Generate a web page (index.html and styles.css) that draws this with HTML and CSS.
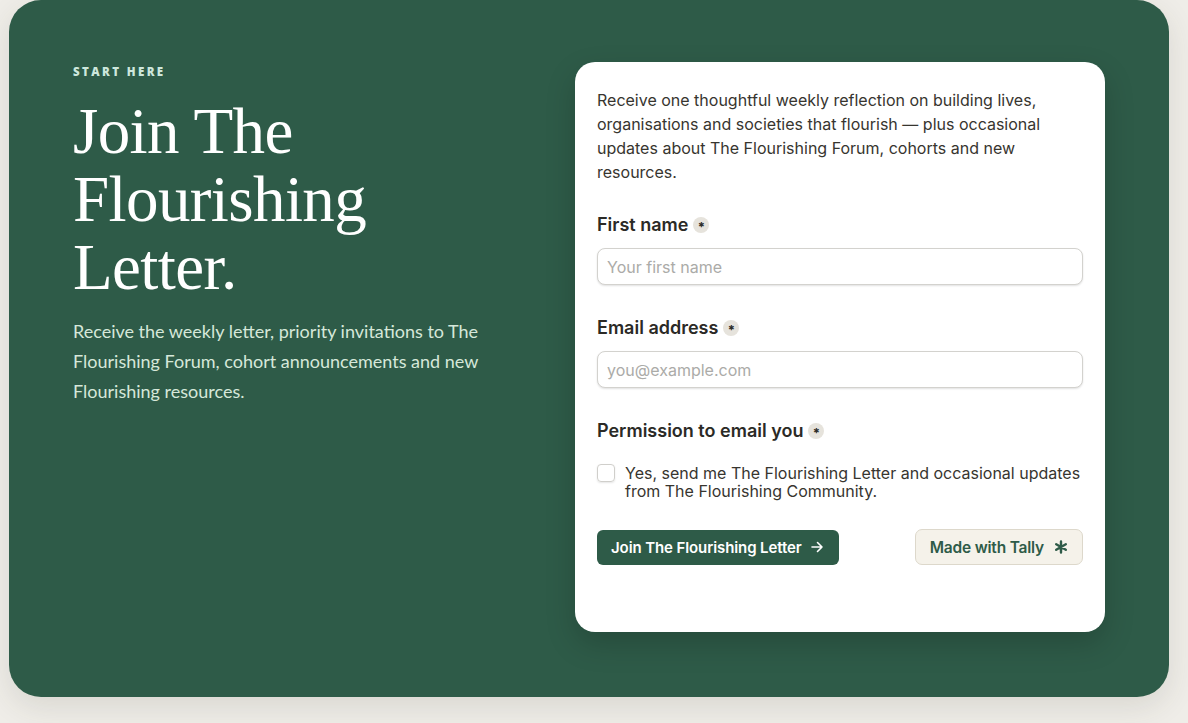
FILE: index.html
```html
<!DOCTYPE html>
<html lang="en">
<head>
<meta charset="utf-8">
<title>Join The Flourishing Letter</title>
<link rel="stylesheet" href="styles.css">
</head>
<body>
<main class="panel">
  <section class="intro">
    <p class="eyebrow">START HERE</p>
    <h1 class="title">Join The Flourishing Letter.</h1>
    <p class="lede">Receive the weekly letter, priority invitations to The Flourishing Forum, cohort announcements and new Flourishing resources.</p>
  </section>
  <section class="card">
    <p class="desc">Receive one thoughtful weekly reflection on building lives, organisations and societies that flourish — plus occasional updates about The Flourishing Forum, cohorts and new resources.</p>
    <div class="field">
      <label class="label">First name <span class="req">*</span></label>
      <input class="input" type="text" placeholder="Your first name">
    </div>
    <div class="field">
      <label class="label">Email address <span class="req">*</span></label>
      <input class="input" type="email" placeholder="you@example.com">
    </div>
    <div class="field">
      <label class="label">Permission to email you <span class="req">*</span></label>
      <label class="check">
        <span class="box"></span>
        <span class="check-text">Yes, send me The Flourishing Letter and occasional updates from The Flourishing Community.</span>
      </label>
    </div>
    <div class="actions">
      <button class="submit" type="button">Join The Flourishing Letter
        <svg class="arrow" width="14" height="14" viewBox="0 0 14 14" fill="none" stroke="currentColor" stroke-width="1.6" stroke-linecap="round" stroke-linejoin="round"><path d="M2 7h10M7.5 2.5L12 7l-4.5 4.5"/></svg>
      </button>
      <a class="tally">Made with Tally
        <svg class="tally-star" width="14" height="14" viewBox="0 0 14 14" fill="none" stroke="currentColor" stroke-width="2.4" stroke-linecap="round"><path d="M7 1.5v11M2.2 4.2l9.6 5.6M11.8 4.2l-9.6 5.6"/></svg>
      </a>
    </div>
  </section>
</main>
</body>
</html>
```
FILE: styles.css
```css
* { box-sizing: border-box; }
html, body { margin: 0; }
body {
  background: #efede8;
  padding: 0 19px 0 9px;
  height: 723px;
  overflow: hidden;
}
.panel {
  background: #2e5b48;
  border-radius: 32px;
  height: 697px;
  display: flex;
  justify-content: space-between;
  padding: 62px 64px 0 64px;
  box-shadow: 0 10px 30px rgba(60, 55, 40, 0.12);
}
.intro {
  width: 430px;
  padding-top: 3px;
}
.eyebrow {
  margin: 0;
  font-family: "Open Sans", sans-serif;
  font-weight: 800;
  font-size: 11.5px;
  letter-spacing: 2.4px;
  color: #cde7dc;
  line-height: 14px;
}
.title {
  margin: 18px 0 0;
  font-family: "Liberation Serif", serif;
  font-weight: 400;
  font-size: 65px;
  line-height: 68px;
  color: #ffffff;
  letter-spacing: -0.6px;
  width: 330px;
}
.lede {
  margin: 15px 0 0;
  font-family: Lato, sans-serif;
  font-size: 18px;
  line-height: 30px;
  color: #d6e8da;
  width: 420px;
}
.card {
  width: 530px;
  height: 570px;
  background: #ffffff;
  border-radius: 20px;
  padding: 26px 22px 0 22px;
  font-family: Inter, sans-serif;
  color: #37352f;
  box-shadow: 0 12px 30px rgba(0, 0, 0, 0.18);
}
.desc {
  margin: 0;
  font-size: 16px;
  line-height: 24px;
  color: #37352f;
  width: 470px;
}
.field { margin-top: 30px; }
.field + .field { margin-top: 32px; }
.label {
  display: flex;
  align-items: center;
  gap: 5px;
  font-size: 18px;
  font-weight: 600;
  color: #2b2a26;
  line-height: 22px;
}
.req {
  display: inline-flex;
  align-items: center;
  justify-content: center;
  width: 16px;
  height: 16px;
  border-radius: 50%;
  background: #e6e3dc;
  font-size: 13px;
  font-weight: 700;
  line-height: 1;
  color: #2b2a26;
  padding-top: 4px;
}
.input {
  display: block;
  width: 486px;
  height: 37px;
  margin-top: 12px;
  border: 1px solid #d3d2ce;
  border-radius: 8px;
  padding: 0 9px;
  font-family: Inter, sans-serif;
  font-size: 16px;
  color: #37352f;
  box-shadow: 0 1px 2px rgba(0, 0, 0, 0.12);
  outline: none;
}
.input::placeholder { color: #ababa8; }
.check {
  display: flex;
  align-items: flex-start;
  gap: 10px;
  margin-top: 22px;
}
.box {
  flex: none;
  width: 18px;
  height: 18px;
  border: 1px solid #d0cfcb;
  border-radius: 4px;
  box-shadow: 0 1px 2px rgba(0, 0, 0, 0.1);
  margin-top: 0;
}
.check-text {
  font-size: 16px;
  line-height: 18px;
  color: #37352f;
}
.actions {
  display: flex;
  justify-content: space-between;
  align-items: center;
  margin-top: 29px;
  width: 486px;
}
.submit {
  display: inline-flex;
  align-items: center;
  gap: 8px;
  height: 35px;
  padding: 0 15px 0 14px;
  border: none;
  border-radius: 6px;
  background: #2e5b48;
  color: #ffffff;
  font-family: Inter, sans-serif;
  font-size: 15px;
  font-weight: 600;
  letter-spacing: -0.1px;
}
.tally {
  display: inline-flex;
  align-items: center;
  gap: 10px;
  height: 36px;
  padding: 0 14px;
  border: 1px solid #ddd8cb;
  border-radius: 7px;
  background: #f5f2ea;
  color: #2e5b48;
  font-size: 15.5px;
  font-weight: 600;
  letter-spacing: -0.2px;
}
```
